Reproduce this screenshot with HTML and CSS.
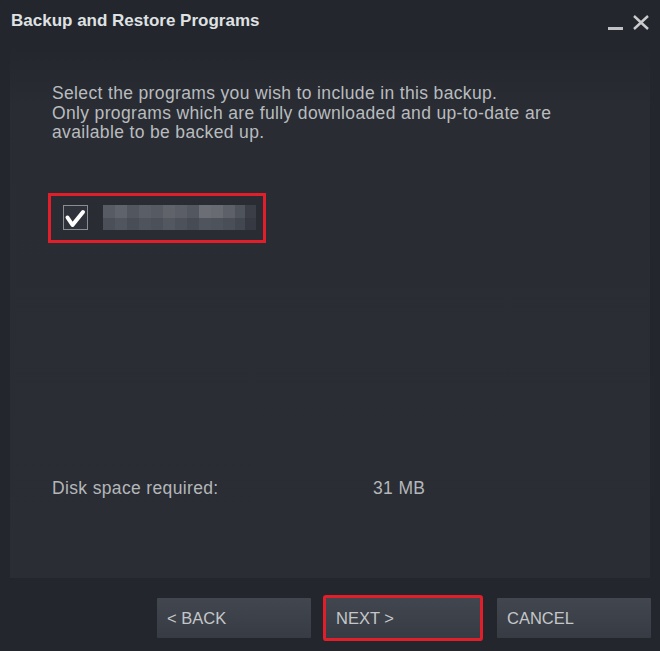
FILE: index.html
```html
<!DOCTYPE html>
<html lang="en">
<head>
    <meta charset="UTF-8">
    <title>Backup and Restore Programs</title>
    <link rel="stylesheet" href="styles.css">
</head>
<body>

<div class="window">
    <!-- Title bar -->
    <div class="titlebar">
        <span class="title">Backup and Restore Programs</span>
        <div class="window-controls">
            <span class="minimize"></span>
            <svg class="close" width="18" height="15" viewBox="0 0 18 15">
                <path d="M2 1 L16 14 M16 1 L2 14" stroke="#c9cbcd" stroke-width="2.4" fill="none"/>
            </svg>
        </div>
    </div>

    <!-- Content -->
    <div class="panel">
        <p class="intro">
            Select the programs you wish to include in this backup.<br>
            Only programs which are fully downloaded and up-to-date are<br>
            available to be backed up.
        </p>

        <div class="program-row">
            <span class="checkbox">
                <svg width="25" height="25" viewBox="0 0 25 25">
                    <path d="M4.5 12.5 L9.5 20 L20 7" stroke="#fff" stroke-width="4" fill="none" stroke-linecap="round" stroke-linejoin="round"/>
                </svg>
            </span>
            <span class="blurred-name">
                <span class="row-top"></span>
                <span class="row-bottom"></span>
            </span>
        </div>

        <div class="disk-space">
            <span class="disk-label">Disk space required:</span>
            <span class="disk-value">31 MB</span>
        </div>
    </div>

    <!-- Buttons -->
    <div class="footer">
        <button class="btn">&lt; BACK</button>
        <button class="btn highlight">NEXT &gt;</button>
        <button class="btn">CANCEL</button>
    </div>
</div>

</body>
</html>
```

FILE: styles.css
```css
body {
    margin: 0;
    padding: 0;
    background-color: #23262d;
    font-family: "Liberation Sans", Arial, sans-serif;
}

.window {
    width: 660px;
    height: 651px;
    display: flex;
    flex-direction: column;
}

.titlebar {
    height: 42px;
    display: flex;
    align-items: center;
    justify-content: space-between;
    padding: 0 10px 0 11px;
}

.title {
    font-size: 17px;
    line-height: 20px;
    color: #dfe1e3;
    font-weight: bold;
}

.window-controls {
    display: flex;
    align-items: flex-end;
    gap: 9px;
    margin-top: 2px;
}

.minimize {
    display: block;
    width: 15px;
    height: 3px;
    background-color: #bfc1c4;
}

.close {
    display: block;
}

.panel {
    flex: 1;
    margin: 4px 10px 0 10px;
    padding: 38px 42px 80px 42px;
    background: linear-gradient(to bottom, #23262d 0px, #292c33 60px, #2a2d34 100%);
    display: flex;
    flex-direction: column;
}

.intro {
    margin: 0;
    font-size: 17.5px;
    letter-spacing: 0.35px;
    line-height: 19.5px;
    color: #b9bcbf;
}

.program-row {
    margin: 50px 0 0 -4px;
    width: 200px;
    height: 44px;
    border: 3px solid #e01f2b;
    display: flex;
    align-items: center;
    padding-left: 12px;
}

.checkbox {
    width: 23px;
    height: 23px;
    border: 1px solid #8a8d92;
    background-color: #2f323a;
    display: flex;
    align-items: center;
    justify-content: center;
    margin-top: -1px;
}

.checkbox svg {
    display: block;
    flex: none;
}

.blurred-name {
    margin-left: 15px;
    width: 153px;
    height: 25px;
    display: flex;
    flex-direction: column;
}

.row-top,
.row-bottom {
    flex: 1;
}

.row-top {
    background: linear-gradient(to right,
        #575b64 0 12px, #5f636b 12px 24px, #52565e 24px 36px, #5a5e66 36px 48px,
        #565a62 48px 60px, #60636a 60px 72px, #5b5e66 72px 84px, #53575f 84px 96px,
        #6b6e75 96px 108px, #686b72 108px 120px, #5d6068 120px 132px, #4f535b 132px 142px,
        #3b3e46 142px 153px);
}

.row-bottom {
    background: linear-gradient(to right,
        #4b4f57 0 12px, #51555d 12px 24px, #494d55 24px 36px, #4f535b 36px 48px,
        #4c5058 48px 60px, #53575f 60px 72px, #4d5159 72px 84px, #474b53 84px 96px,
        #50545c 96px 108px, #4e525a 108px 120px, #4a4e56 120px 132px, #43474f 132px 142px,
        #363941 142px 153px);
}

.disk-space {
    margin-top: auto;
    display: flex;
    font-size: 17.5px;
    letter-spacing: 0.35px;
    line-height: 20px;
    color: #b4b7ba;
}

.disk-label {
    width: 321px;
}

.footer {
    height: 73px;
    display: flex;
    justify-content: flex-end;
    align-items: flex-start;
    gap: 15px;
    padding: 20px 9px 0 0;
    box-sizing: border-box;
}

.btn {
    width: 154px;
    height: 40px;
    border: none;
    border-radius: 1px;
    background: linear-gradient(to bottom, #42464e, #373b43);
    color: #c4c7ca;
    font-family: "Liberation Sans", Arial, sans-serif;
    font-size: 16.5px;
    text-align: left;
    padding: 0 0 0 10px;
    cursor: pointer;
}

.btn.highlight {
    box-shadow: 0 0 0 3px #e01f2b;
    margin-right: 2px;
}
```
